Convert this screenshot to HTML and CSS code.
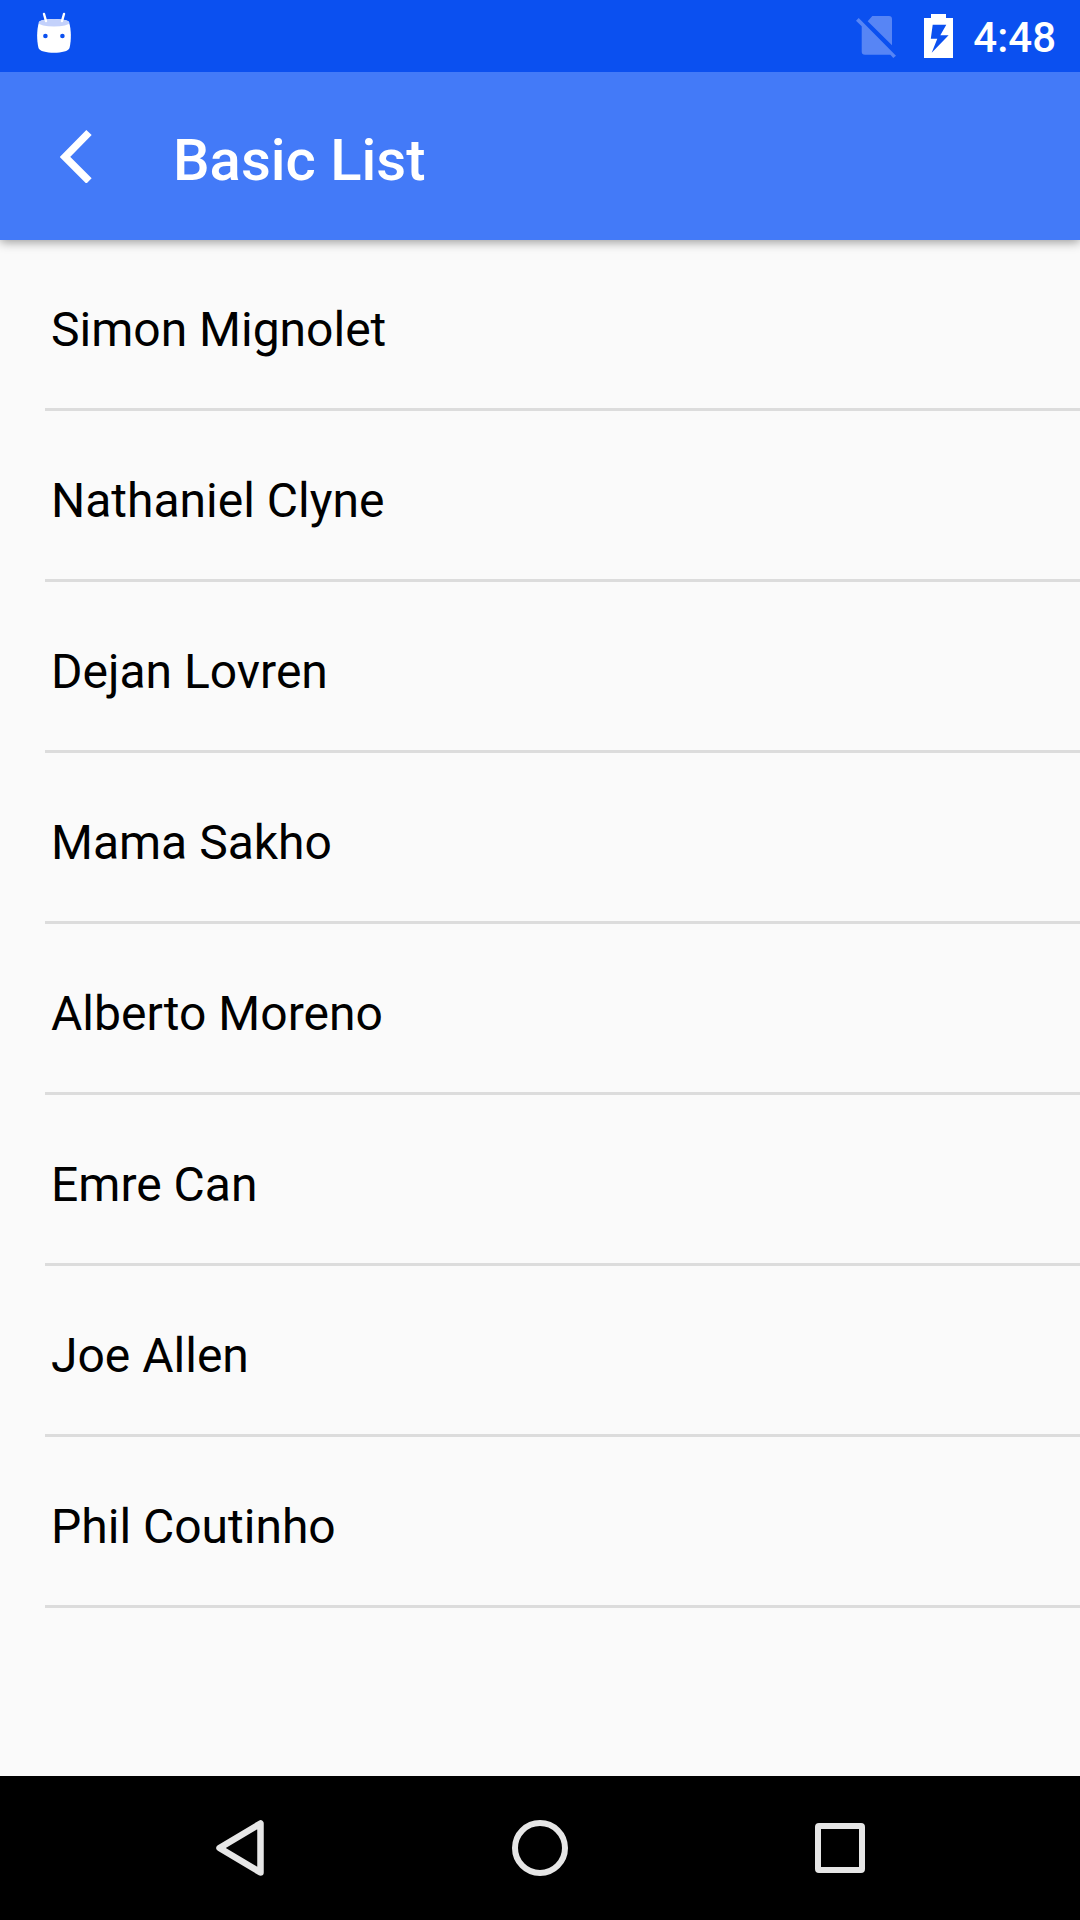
FILE: index.html
```html
<!DOCTYPE html>
<html lang="en">
<head>
  <meta charset="utf-8">
  <meta name="viewport" content="width=device-width, initial-scale=1">
  <title>Basic List</title>
  <link rel="stylesheet" href="styles.css">
</head>
<body>
  <div class="screen">
    <div class="status-bar">
      <svg class="status-icon" viewBox="0 0 36 44" width="36" height="44" aria-hidden="true">
        <path d="M3 10 C5 6 31 6 33 10 C35.400 18 35.400 28 33.500 36 C32 42.300 4 42.300 2.500 36 C0.600 28 0.600 18 3 10Z" fill="#fff"/>
        <ellipse cx="18" cy="10.700" rx="15.300" ry="3.800" fill="#c3d1fb"/>
        <path d="M8 2 L10 9 M28 2 L26 9" stroke="#fff" stroke-width="2.400" stroke-linecap="round" fill="none"/>
        <circle cx="9.400" cy="24" r="2.300" fill="#0b50f0"/>
        <circle cx="26.400" cy="24" r="2.300" fill="#0b50f0"/>
      </svg>
      <div class="status-info">
        <svg viewBox="0 0 40 44" width="40" height="44" aria-hidden="true">
          <path d="M16.300 2 H33 Q36 2 36 5 V31.300 L11.700 7.300Z M2.700 4 L40 41.700 L37.300 44 L34.300 40.700 H9 Q5.700 40.700 5.700 37.700 V12.300 L0 6.700Z" fill="#5785f5"/>
        </svg>
        <svg class="battery" viewBox="0 0 29 44" width="29" height="44" aria-hidden="true">
          <path d="M7 0 H22 V4 H29 V44 H0 V4 H7Z" fill="#fff"/>
          <path d="M8.700 10.700 H22.300 L16.300 21.300 H24.600 L7.700 38.700 L13.300 24.700 H6.800Z" fill="#0b50f0"/>
        </svg>
        <time class="clock">4:48</time>
      </div>
    </div>
    <header class="app-bar">
      <button class="back" type="button" aria-label="Back">
        <svg viewBox="0 0 32 54" width="32" height="54" aria-hidden="true">
          <path d="M29 3.500 L5 28 L29 52" fill="none" stroke="#fff" stroke-width="7.500"/>
        </svg>
      </button>
      <h1 class="title">Basic List</h1>
    </header>
    <main class="content">
      <ul class="list">
        <li class="item">Simon Mignolet</li>
        <li class="item">Nathaniel Clyne</li>
        <li class="item">Dejan Lovren</li>
        <li class="item">Mama Sakho</li>
        <li class="item">Alberto Moreno</li>
        <li class="item">Emre Can</li>
        <li class="item">Joe Allen</li>
        <li class="item">Phil Coutinho</li>
      </ul>
    </main>
    <nav class="nav-bar" aria-label="System">
      <button class="nav-button" type="button" aria-label="Back">
        <svg viewBox="0 0 60 60" width="60" height="60" aria-hidden="true">
          <path d="M9.500 30 L50.500 5.500 V54.500Z" fill="none" stroke="#e6e6e6" stroke-width="6.500" stroke-linejoin="round"/>
        </svg>
      </button>
      <button class="nav-button" type="button" aria-label="Home">
        <svg viewBox="0 0 60 60" width="60" height="60" aria-hidden="true">
          <circle cx="30" cy="30" r="25" fill="none" stroke="#e6e6e6" stroke-width="6"/>
        </svg>
      </button>
      <button class="nav-button" type="button" aria-label="Recent apps">
        <svg viewBox="0 0 60 60" width="60" height="60" aria-hidden="true">
          <path d="M9 5 H51 Q55 5 55 9 V51 Q55 55 51 55 H9 Q5 55 5 51 V9 Q5 5 9 5Z M11 11 V49 H49 V11Z" fill="#e6e6e6" fill-rule="evenodd"/>
        </svg>
      </button>
    </nav>
  </div>
</body>
</html>
```
FILE: styles.css
```css
* {
  box-sizing: border-box;
}

body {
  margin: 0;
  font-family: Roboto, "Liberation Sans", sans-serif;
  background: #fafafa;
  color: #000;
}

svg {
  display: block;
}

button {
  padding: 0;
  border: 0;
  background: none;
  cursor: pointer;
}

.screen {
  display: flex;
  flex-direction: column;
  min-height: 100vh;
}

.status-bar {
  display: flex;
  justify-content: space-between;
  align-items: center;
  height: 72px;
  padding: 0 24px 0 36px;
  background: #0b50f0;
  z-index: 1;
}

.status-icon {
  margin-bottom: 4px;
}

.status-info {
  display: flex;
  align-items: center;
}

.battery {
  margin: 0 20px 0 28px;
}

.clock {
  padding-top: 4px;
  font-size: 42px;
  font-weight: 500;
  line-height: 48px;
  color: #fff;
}

.app-bar {
  display: flex;
  align-items: center;
  height: 168px;
  padding: 0 60px;
  gap: 81px;
  background: #437af8;
  box-shadow: 0 2px 10px rgba(0, 0, 0, 0.4);
}

.title {
  margin: 8px 0 0;
  font-size: 58px;
  font-weight: 500;
  line-height: 72px;
  color: #fff;
}

.content {
  flex: 1;
}

.list {
  margin: 0;
  padding: 0 0 0 45px;
  list-style: none;
}

.item {
  padding: 60px 48px 48px 6px;
  border-bottom: 3px solid #dcdcdc;
  font-size: 48px;
  line-height: 60px;
}

.nav-bar {
  display: flex;
  justify-content: center;
  height: 144px;
  background: #000;
}

.nav-button {
  display: flex;
  flex: 0 1 300px;
  justify-content: center;
  align-items: center;
}
```
